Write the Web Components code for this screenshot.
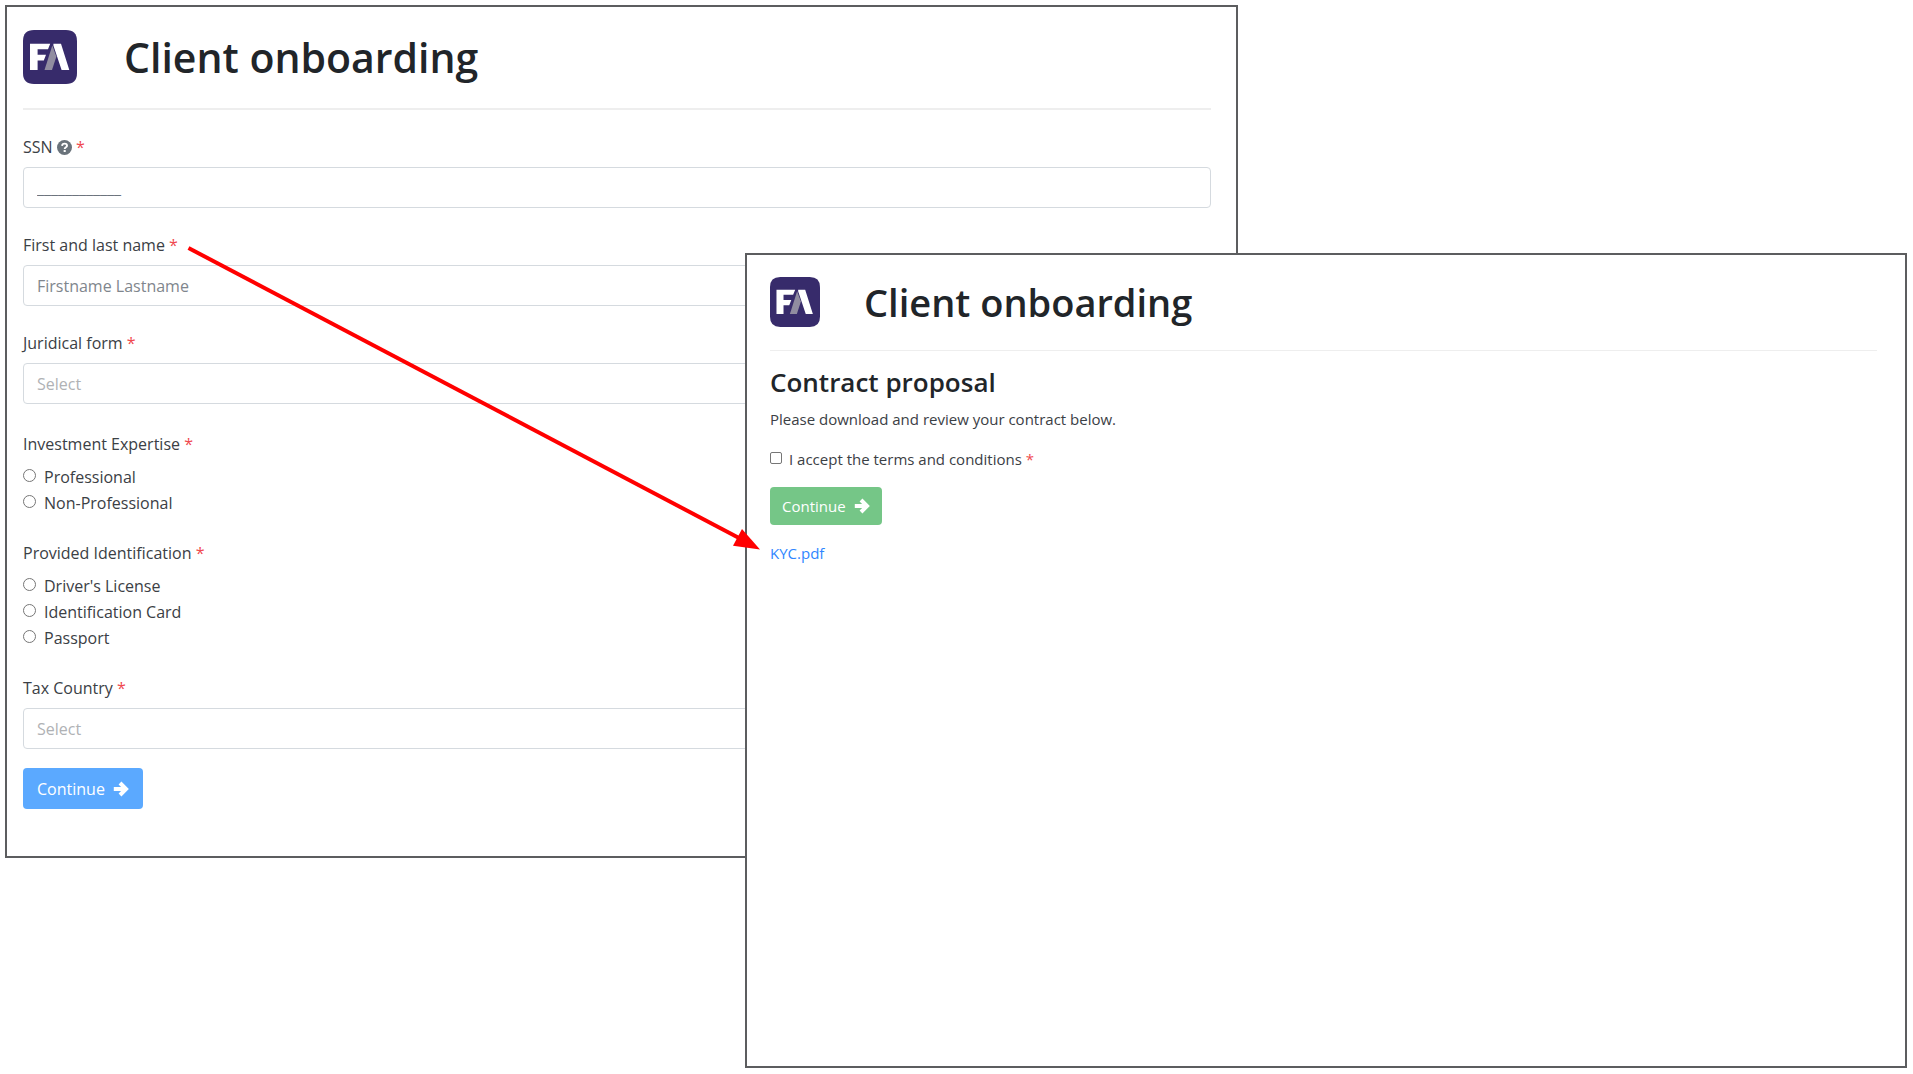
<!DOCTYPE html>
<html lang="en">
<head>
<meta charset="utf-8">
<title>Client onboarding</title>
<style>
  html { background: #fff; }
  body { margin: 0; font-family: "Open Sans", "Noto Sans", sans-serif; color: #3b4045; }
</style>
</head>
<body>
<onboarding-stage>
  <form-window slot="first" style="--text: 16px; --line: 26px; --title: 41px; --logo: 54px; --gap: 47px; --under: 24px; --rule: 2px; --pad: 23px 25px 47px 16px">
    <window-header heading="Client onboarding"></window-header>
    <text-field label="SSN" help value="____________"></text-field>
    <text-field label="First and last name" placeholder="Firstname Lastname"></text-field>
    <select-field label="Juridical form"></select-field>
    <radio-group label="Investment Expertise" options="Professional|Non-Professional"></radio-group>
    <radio-group label="Provided Identification" options="Driver's License|Identification Card|Passport"></radio-group>
    <select-field label="Tax Country"></select-field>
    <continue-button style="--fill: #5ba9ff; --height: 41px; --side: 14px; margin-top: 19px">Continue</continue-button>
  </form-window>
  <form-window slot="second" style="--text: 15px; --line: 24px; --title: 38px; --logo: 50px; --gap: 44px; --under: 23px; --rule: 1px; --pad: 22px 28px 24px 23px">
    <window-header heading="Client onboarding"></window-header>
    <contract-proposal></contract-proposal>
  </form-window>
  <flow-arrow slot="arrow"></flow-arrow>
</onboarding-stage>

<script>
const base = '*,:host{box-sizing:border-box}:host{display:block}.req{color:#f0484e}';

class Base extends HTMLElement {
  connectedCallback() {
    if (this.shadowRoot) return;
    this.attachShadow({ mode: 'open' }).innerHTML = '<style>' + base + this.css() + '</style>' + this.html();
  }
  css() { return ''; }
  html() { return '<slot></slot>'; }
  attr(name) { return this.getAttribute(name) || ''; }
}

/* Two overlapping windows on one grid, with the arrow drawn over both */
customElements.define('onboarding-stage', class extends Base {
  css() { return `
    :host{display:grid;position:relative;min-height:100vh;padding:5px 6px 6px 5px;
      grid-template-columns:minmax(0,740fr) minmax(0,493fr) minmax(0,669fr);
      grid-template-rows:248px auto 1fr}
    slot[name=first]::slotted(*){grid-area:1/1/3/3}
    slot[name=second]::slotted(*){grid-area:2/2/4/4}`; }
  html() { return '<slot name="first"></slot><slot name="second"></slot><slot name="arrow"></slot>'; }
});

customElements.define('form-window', class extends Base {
  css() { return `:host{background:#fff;border:2px solid #5c5d5f;padding:var(--pad);font-size:var(--text);line-height:var(--line)}`; }
});

customElements.define('fa-logo', class extends Base {
  css() { return ':host{width:var(--logo);height:var(--logo);flex:none}svg{display:block;width:100%;height:100%}'; }
  html() { return `<svg viewBox="0 0 54 54" aria-hidden="true">
    <path fill="#372b6b" d="M11 0H43Q54 0 54 11V43Q54 54 43 54H11Q0 54 0 43V11Q0 0 11 0Z"/>
    <path fill="#918da0" d="M29.3 15.5L33.4 26.5L29 40H21.5Z"/>
    <path fill="#fff" d="M7 13.7H27.2L25 19.3H14.6V24.8H23L20.8 30.4H14.6V40H7ZM30.4 13.7H38L46.3 40H38.6L30.4 15.5Z"/>
  </svg>`; }
});

customElements.define('window-header', class extends Base {
  css() { return `
    header{display:flex;align-items:center;gap:var(--gap);padding-bottom:var(--under);border-bottom:var(--rule) solid #eee}
    h1{margin:0;font-size:var(--title);font-weight:600;line-height:var(--logo);color:#212529}`; }
  html() { return `<header><fa-logo></fa-logo><h1>${this.attr('heading')}</h1></header>`; }
});

const fieldCss = `
  :host{margin-top:24px}
  label{display:block;margin-bottom:7px}
  input,select{display:block;width:100%;height:41px;padding:0 13px;border:1px solid #d5dadf;border-radius:4px;
    background:#fff;font:inherit;color:#6c757d;appearance:none;outline:0}
  input::placeholder{color:#7f868d;opacity:1}
  select{color:#b0b2b5}
  .help{width:15px;height:15px;vertical-align:-2px}`;

customElements.define('text-field', class extends Base {
  css() { return fieldCss; }
  html() {
    const help = this.hasAttribute('help') ? `<svg class="help" viewBox="0 0 16 16" aria-hidden="true"><circle cx="8" cy="8" r="8" fill="#6a737b"/><path d="M5.4 6.3C5.5 4.6 6.6 3.8 8.1 3.8C9.6 3.8 10.7 4.7 10.7 6C10.7 7.7 8.2 7.8 8.2 9.5" fill="none" stroke="#fff" stroke-width="2"/><rect x="7.1" y="10.7" width="2.2" height="2.1" fill="#fff"/></svg> ` : '';
    return `<label for="f">${this.attr('label')} ${help}<span class="req">*</span></label>
      <input id="f" type="text" value="${this.attr('value')}" placeholder="${this.attr('placeholder')}">`;
  }
});

customElements.define('select-field', class extends Base {
  css() { return fieldCss + ':host{margin-bottom:3px}'; }
  html() { return `<label for="f">${this.attr('label')} <span class="req">*</span></label>
    <select id="f"><option>Select</option></select>`; }
});

customElements.define('radio-group', class extends Base {
  css() { return `
    :host{padding-top:24px}
    fieldset{border:0;margin:0;padding:0;min-width:0}
    legend{padding:0;margin-bottom:7px}
    label{display:flex;gap:8px}
    input{appearance:none;width:13px;height:13px;margin:5px 0 0;border:1px solid #767676;border-radius:50%;background:#fff;flex:none}`; }
  html() { return `<fieldset><legend>${this.attr('label')} <span class="req">*</span></legend>
    ${this.attr('options').split('|').map(o => `<label><input type="radio" name="r"><span>${o}</span></label>`).join('')}</fieldset>`; }
});

customElements.define('continue-button', class extends Base {
  css() { return `
    :host{display:flow-root}
    button{display:flex;align-items:center;gap:8px;height:var(--height);padding:0 var(--side);border:0;border-radius:4px;
      background:var(--fill);color:#fff;font:inherit}
    svg{width:16px;height:16px}`; }
  html() { return `<button type="button"><slot></slot><svg viewBox="0 0 16 16" aria-hidden="true"><path d="M.8 8H12.5M7 2L13 8L7 14" fill="none" stroke="#fff" stroke-width="4"/></svg></button>`; }
});

customElements.define('contract-proposal', class extends Base {
  css() { return `
    h2{margin:0 0 8px;padding-top:14px;font-size:26px;line-height:34px;font-weight:600;color:#212529}
    p{margin:0 0 16px}
    label{display:flex;gap:7px}
    input{appearance:none;width:12px;height:12px;margin:5px 0 0;border:1px solid #767676;border-radius:2px;background:#fff;flex:none}
    continue-button{--fill:#75c687;--height:38px;--side:12px;margin:16px 0}
    a{color:#2f86ff;text-decoration:none}`; }
  html() { return `<h2>Contract proposal</h2>
    <p>Please download and review your contract below.</p>
    <label><input type="checkbox"><span>I accept the terms and conditions <span class="req">*</span></span></label>
    <continue-button>Continue</continue-button>
    <a href="#">KYC.pdf</a>`; }
});

customElements.define('flow-arrow', class extends Base {
  css() { return ':host{position:absolute;inset:0;pointer-events:none}svg{display:block;width:100%;height:100%}'; }
  html() { return `<svg viewBox="0 0 1913 1074" preserveAspectRatio="none" aria-hidden="true">
    <path d="M188.5 248L740 538.5" stroke="#f00" stroke-width="4"/><path d="M760 549.5L742 529L733 545.7Z" fill="#f00"/></svg>`; }
});
</script>
</body>
</html>
